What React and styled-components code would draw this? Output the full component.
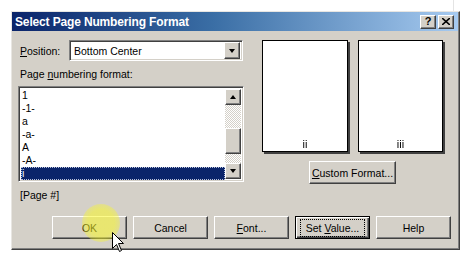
import React from 'react';
import styled, { createGlobalStyle, css } from 'styled-components';

const GlobalStyle = createGlobalStyle`
  html, body { margin: 0; padding: 0; background: #fff; }
  * { box-sizing: border-box; }
  #root {
    font-family: 'Liberation Sans', Arial, sans-serif;
    font-size: 10.5px;
    color: #000;
    -webkit-font-smoothing: antialiased;
  }
`;

const raised = css`
  border: 1px solid;
  border-color: #fff #404040 #404040 #fff;
  box-shadow: inset -1px -1px #808080, inset 1px 1px #d4d0c8;
  background: #d4d0c8;
`;

const sunken = css`
  border: 1px solid;
  border-color: #808080 #fff #fff #808080;
  box-shadow: inset 1px 1px #404040, inset -1px -1px #d4d0c8;
  background: #fff;
`;

const Screen = styled.div`
  position: relative;
  width: 470px;
  height: 260px;
  overflow: hidden;
  padding: 11px 0 0 11px;
`;

const EdgeLine = styled.div`
  position: absolute;
  top: 0;
  left: 453px;
  width: 1px;
  height: 11px;
  background: #e4e4e4;
`;

const Dialog = styled.div`
  width: 449px;
  height: 239px;
  background: #d4d0c8;
  border: 1px solid;
  border-color: #e8e6e2 #404040 #404040 #e8e6e2;
  box-shadow: inset -1px -1px #808080;
  display: flex;
  flex-direction: column;
`;

const TitleBar = styled.div`
  height: 19px;
  margin: 0 1px 0 0;
  display: flex;
  align-items: center;
  padding: 0 4px 0 3px;
  background: linear-gradient(90deg, #0a246a 0%, #3a6ea5 45%, #a6caf0 100%);
`;

const Title = styled.div`
  flex: 1;
  color: #fff;
  font-weight: bold;
  font-size: 12px;
  letter-spacing: -0.15px;
`;

const CaptionButton = styled.div`
  ${raised};
  width: 16px;
  height: 14px;
  margin-left: 2px;
  display: flex;
  align-items: center;
  justify-content: center;
  font-weight: bold;
  font-size: 11px;
  line-height: 1;
`;

const Body = styled.div`
  padding: 9px 8px 0 6px;
  display: flex;
  flex-direction: column;
`;

const TopRow = styled.div`
  display: flex;
  align-items: flex-start;
  gap: 17px;
`;

const LeftCol = styled.div`
  width: 226px;
  display: flex;
  flex-direction: column;
`;

const FieldRow = styled.div`
  display: flex;
  align-items: center;
  height: 21px;
  padding-left: 2px;
`;

const Label = styled.div`
  line-height: 13px;
  padding-left: 2px;
  margin-top: ${p => p.$mt || 0}px;
`;

const Combo = styled.div`
  ${sunken};
  width: 174px;
  height: 21px;
  margin-left: auto;
  margin-right: 1px;
  display: flex;
  align-items: center;
  padding: 2px;
`;

const ComboText = styled.div`
  flex: 1;
  padding-left: 2px;
`;

const ArrowButton = styled.div`
  ${raised};
  width: 16px;
  height: ${p => p.$h || 16}px;
  display: flex;
  align-items: center;
  justify-content: center;
`;

const Tri = styled.div`
  width: 0;
  height: 0;
  border-left: 3.5px solid transparent;
  border-right: 3.5px solid transparent;
  ${p => (p.$up ? 'border-bottom: 4px solid #000;' : 'border-top: 4px solid #000;')}
`;

const ListBox = styled.div`
  ${sunken};
  margin-top: 5px;
  height: 96px;
  padding: 2px;
  display: flex;
`;

const Items = styled.div`
  flex: 1;
  display: flex;
  flex-direction: column;
`;

const Item = styled.div`
  height: 13px;
  line-height: 13px;
  padding-left: 1px;
  ${p => p.$selected && css`
    background: #0a246a;
    color: #fff;
    outline: 1px dotted #b8c0d8;
    outline-offset: -1px;
  `}
`;

const ScrollBar = styled.div`
  width: 16px;
  display: flex;
  flex-direction: column;
`;

const Track = styled.div`
  flex: 1;
  background-image: conic-gradient(#fff 25%, #d4d0c8 0 50%, #fff 0 75%, #d4d0c8 0);
  background-size: 2px 2px;
  padding-top: 23px;
`;

const Thumb = styled.div`
  ${raised};
  height: 26px;
`;

const RightCol = styled.div`
  display: flex;
  flex-direction: column;
  align-items: center;
  width: 183px;
`;

const Pages = styled.div`
  display: flex;
  gap: 10px;
`;

const Page = styled.div`
  width: ${p => p.$w}px;
  height: 112px;
  background: #fff;
  border: 1px solid #000;
  box-shadow: 2px 2px 0 #404040;
  display: flex;
  align-items: flex-end;
  justify-content: center;
  padding-bottom: 1px;
  line-height: 12px;
`;

const PageNum = styled.span`
  color: #000;
  font-size: 11px;
  filter: grayscale(1);
`;

const Button = styled.div`
  ${raised};
  width: ${p => p.$w || 75}px;
  height: 23px;
  margin-top: ${p => p.$mt || 0}px;
  display: flex;
  align-items: center;
  justify-content: center;
  ${p => p.$focus && css`
    border: 1px solid #000;
    box-shadow: inset 1px 1px #fff, inset -1px -1px #404040, inset -2px -2px #808080;
  `}
`;

const FocusRect = styled.span`
  outline: 1px dotted #000;
  outline-offset: 2px;
  padding: 0 3px;
`;

const ButtonRow = styled.div`
  display: flex;
  gap: 6px;
  margin-top: 14px;
  padding-left: 34px;
`;

const Highlight = styled.div`
  position: absolute;
  left: 82px;
  top: 204px;
  width: 38px;
  height: 38px;
  border-radius: 50%;
  background: radial-gradient(circle, rgba(250, 248, 40, 0.55) 50%, rgba(250, 248, 40, 0.28) 78%, rgba(250, 248, 40, 0) 100%);
`;

const Cursor = styled.svg`
  position: absolute;
  left: 112px;
  top: 232px;
`;

const pageFormats = ['1', '-1-', 'a', '-a-', 'A', '-A-', 'i'];

export default function App() {
  return (
    <Screen>
      <GlobalStyle />
      <EdgeLine />
      <Dialog>
        <TitleBar>
          <Title>Select Page Numbering Format</Title>
          <CaptionButton>?</CaptionButton>
          <CaptionButton>
            <svg width="8" height="7" viewBox="0 0 8 7">
              <path d="M0 0 L8 7 M8 0 L0 7" stroke="#000" strokeWidth="1.6" />
            </svg>
          </CaptionButton>
        </TitleBar>
        <Body>
          <TopRow>
            <LeftCol>
              <FieldRow>
                <span><u>P</u>osition:</span>
                <Combo>
                  <ComboText>Bottom Center</ComboText>
                  <ArrowButton $h={17}><Tri /></ArrowButton>
                </Combo>
              </FieldRow>
              <Label $mt={7}>Page <u>n</u>umbering format:</Label>
              <ListBox>
                <Items>
                  {pageFormats.map((f, i) => (
                    <Item key={f} $selected={i === pageFormats.length - 1}>{f}</Item>
                  ))}
                </Items>
                <ScrollBar>
                  <ArrowButton><Tri $up /></ArrowButton>
                  <Track><Thumb /></Track>
                  <ArrowButton><Tri /></ArrowButton>
                </ScrollBar>
              </ListBox>
              <Label $mt={7}>[Page #]</Label>
            </LeftCol>
            <RightCol>
              <Pages>
                <Page $w={86}><PageNum>ii</PageNum></Page>
                <Page $w={85}><PageNum>iii</PageNum></Page>
              </Pages>
              <Button $w={87} $mt={9}><span><u>C</u>ustom Format...</span></Button>
            </RightCol>
          </TopRow>
          <ButtonRow>
            <Button>OK</Button>
            <Button>Cancel</Button>
            <Button><span><u>F</u>ont...</span></Button>
            <Button $focus><FocusRect>Set <u>V</u>alue...</FocusRect></Button>
            <Button>Help</Button>
          </ButtonRow>
        </Body>
      </Dialog>
      <Highlight />
      <Cursor width="13" height="21" viewBox="0 0 13 21">
        <path d="M0.5 0.5 L0.5 16.5 L4.5 12.5 L7.5 19.5 L9.5 18.5 L6.5 11.5 L11.5 11.5 Z" fill="#fff" stroke="#000" strokeWidth="1" />
      </Cursor>
    </Screen>
  );
}
